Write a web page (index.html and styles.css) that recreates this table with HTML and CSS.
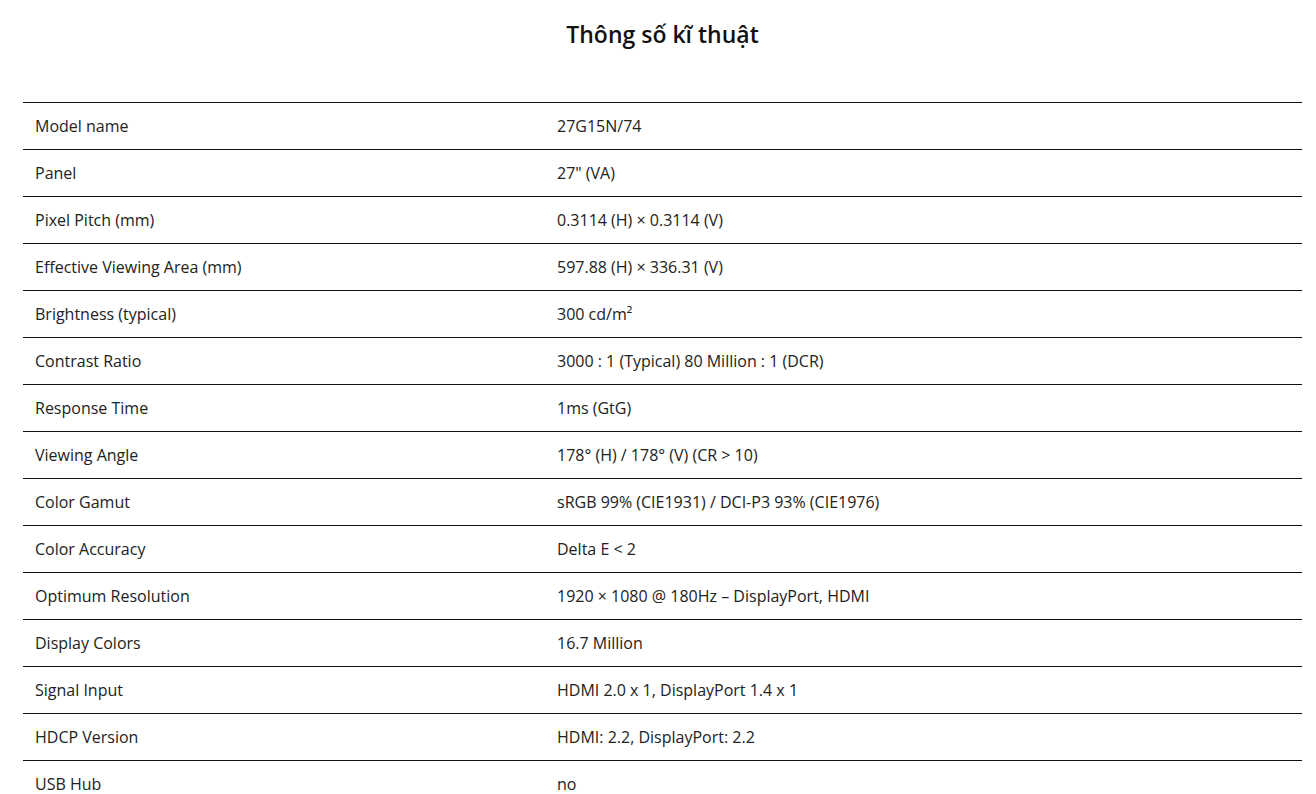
FILE: index.html
```html
<!DOCTYPE html>
<html lang="vi">
<head>
<meta charset="utf-8">
<link rel="stylesheet" href="styles.css">
</head>
<body>
<section class="specs">
  <h2 class="specs-title">Thông số kĩ thuật</h2>
  <table class="specs-table">
    <tbody>
      <tr><td class="label">Model name</td><td class="value">27G15N/74</td></tr>
      <tr><td class="label">Panel</td><td class="value">27" (VA)</td></tr>
      <tr><td class="label">Pixel Pitch (mm)</td><td class="value">0.3114 (H) × 0.3114 (V)</td></tr>
      <tr><td class="label">Effective Viewing Area (mm)</td><td class="value">597.88 (H) × 336.31 (V)</td></tr>
      <tr><td class="label">Brightness (typical)</td><td class="value">300 cd/m²</td></tr>
      <tr><td class="label">Contrast Ratio</td><td class="value">3000 : 1 (Typical) 80 Million : 1 (DCR)</td></tr>
      <tr><td class="label">Response Time</td><td class="value">1ms (GtG)</td></tr>
      <tr><td class="label">Viewing Angle</td><td class="value">178° (H) / 178° (V) (CR &gt; 10)</td></tr>
      <tr><td class="label">Color Gamut</td><td class="value">sRGB 99% (CIE1931) / DCI-P3 93% (CIE1976)</td></tr>
      <tr><td class="label">Color Accuracy</td><td class="value">Delta E &lt; 2</td></tr>
      <tr><td class="label">Optimum Resolution</td><td class="value">1920 × 1080 @ 180Hz – DisplayPort, HDMI</td></tr>
      <tr><td class="label">Display Colors</td><td class="value">16.7 Million</td></tr>
      <tr><td class="label">Signal Input</td><td class="value">HDMI 2.0 x 1, DisplayPort 1.4 x 1</td></tr>
      <tr><td class="label">HDCP Version</td><td class="value">HDMI: 2.2, DisplayPort: 2.2</td></tr>
      <tr><td class="label">USB Hub</td><td class="value">no</td></tr>
    </tbody>
  </table>
</section>
</body>
</html>
```

FILE: styles.css
```css
* { box-sizing: border-box; }
html, body {
  margin: 0;
  padding: 0;
  background: #fff;
}
body {
  font-family: "Open Sans", "Noto Sans", sans-serif;
  color: #222;
}
.specs {
  padding: 0 14px 0 23px;
}
.specs-title {
  margin: 0;
  padding-top: 18px;
  height: 102px;
  text-align: center;
  font-size: 23px;
  font-weight: 600;
  line-height: 32px;
  color: #111;
}
.specs-table {
  width: 100%;
  border-collapse: collapse;
  font-size: 16px;
}
.specs-table tr {
  border-top: 1px solid #111;
}
.specs-table td {
  padding: 12px;
  line-height: 22px;
  vertical-align: middle;
}
.specs-table td.label {
  width: 522px;
}
```
